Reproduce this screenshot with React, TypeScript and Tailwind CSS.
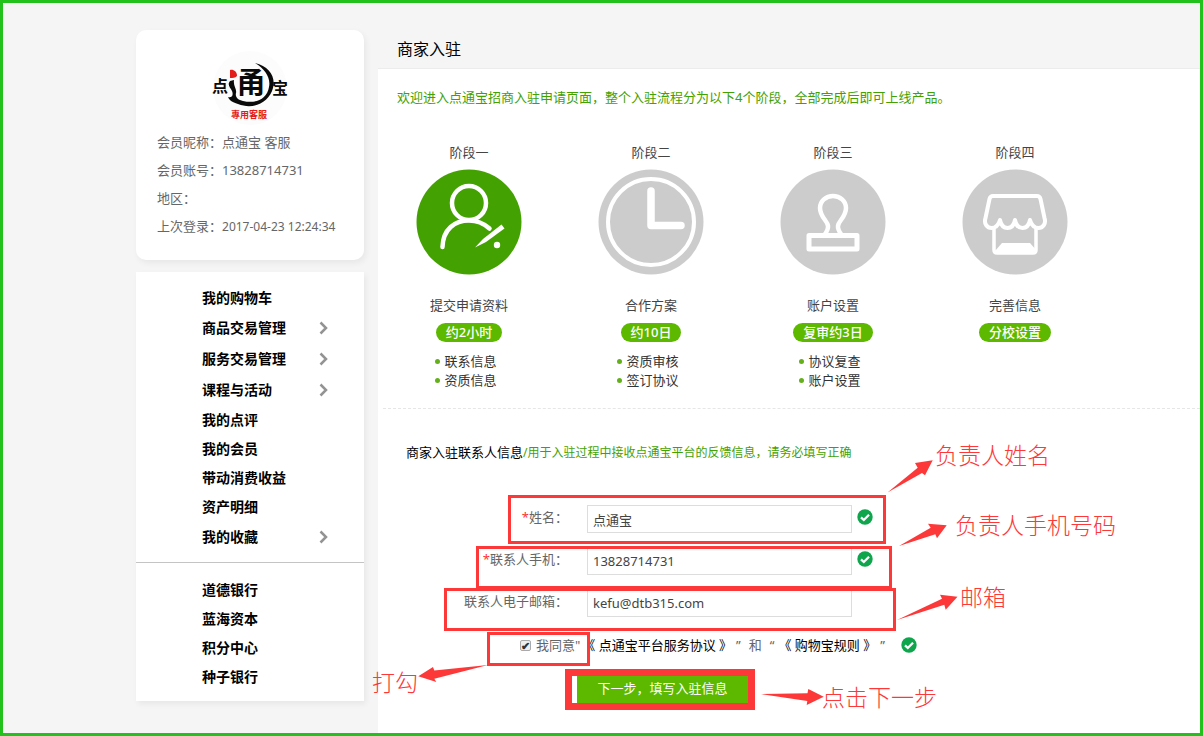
import { useState } from "react";
import type { ReactNode } from "react";
import { clsx } from "clsx";

type MenuItem = { label: string; expandable?: boolean };

type Stage = {
  title: string;
  name: string;
  badge: string;
  active?: boolean;
  items: string[];
  icon: ReactNode;
};

const mainMenu: MenuItem[] = [
  { label: "我的购物车" },
  { label: "商品交易管理", expandable: true },
  { label: "服务交易管理", expandable: true },
  { label: "课程与活动", expandable: true },
  { label: "我的点评" },
  { label: "我的会员" },
  { label: "带动消费收益" },
  { label: "资产明细" },
  { label: "我的收藏", expandable: true },
];

const bankMenu: MenuItem[] = [
  { label: "道德银行" },
  { label: "蓝海资本" },
  { label: "积分中心" },
  { label: "种子银行" },
];

const stages: Stage[] = [
  {
    title: "阶段一",
    name: "提交申请资料",
    badge: "约2小时",
    active: true,
    items: ["联系信息", "资质信息"],
    icon: (
      <g fill="none" stroke="#fff" strokeWidth="4.5" strokeLinecap="round">
        <circle cx="53" cy="34" r="17" />
        <path d="M26.500 78C27 60 39 51.500 53 51.500c9 0 16 4 20.500 8" />
        <path d="M59 78.500 67 70 85.500 55.500 88.500 59.500 70 73Z" fill="#fff" stroke="none" />
        <circle cx="81" cy="76" r="3.200" fill="#fff" stroke="none" />
      </g>
    ),
  },
  {
    title: "阶段二",
    name: "合作方案",
    badge: "约10日",
    items: ["资质审核", "签订协议"],
    icon: (
      <g fill="none" stroke="#fff" strokeLinecap="round" strokeLinejoin="round">
        <circle cx="53" cy="53" r="43" strokeWidth="4" />
        <path d="M53 22v34.500h30" strokeWidth="7.500" />
      </g>
    ),
  },
  {
    title: "阶段三",
    name: "账户设置",
    badge: "复审约3日",
    items: ["协议复查", "账户设置"],
    icon: (
      <g fill="none" stroke="#fff" strokeLinejoin="round">
        <path
          d="M45 65C50 58 48 55 45 51 42 47 40 44 40 39c0-7 6-12 13-12s13 5 13 12c0 5-2 8-5 12-3 4-5 7 0 14"
          strokeWidth="4.500"
        />
        <rect x="29" y="66.500" width="48" height="13.500" strokeWidth="5" />
      </g>
    ),
  },
  {
    title: "阶段四",
    name: "完善信息",
    badge: "分校设置",
    items: [],
    icon: (
      <g fill="none" stroke="#fff" strokeWidth="4" strokeLinejoin="round" strokeLinecap="round">
        <path d="M31 27h44c2 0 3 1 3.500 3L82.500 49c2 6-2 10-6 10s-7-3-8.500-8c-1 5-4 8-7.500 8S54 56 53 51c-1 5-4 8-7.500 8S39 56 38 51c-1.500 5-4.500 8-8.500 8s-8-4-6-10L27.500 30c.5-2 1.500-3 3.500-3Z" />
        <path d="M32 60v21c0 2 1 3 3 3h36c2 0 3-1 3-3V60" strokeWidth="3.500" />
        <path d="M33 82 40 74h28l7 8v2H33Z" fill="#fff" stroke="none" />
      </g>
    ),
  },
];

function Logo() {
  return (
    <svg viewBox="0 0 76 76" className="mx-auto h-[76px] w-[76px]" role="img" aria-label="点通宝">
      <circle cx="38" cy="38" r="37" fill="#fcfcfc" />
      <path
        d="M43 13C57 16 64 27 61 38 57 53 41 60 26 54 20 52 17 50 16 47c3 1 6-1 4-6-2-4-5-6-2-10l4-1c-1 6 3 9 2 13-1 4 2 7 7 8 13 3 24-2 26-14 2-9-4-18-14-24Z"
        fill="#0a0a0a"
      />
      <path d="M18 20c3-1 7 1 7 6-2 2-4 2-7 2Z" fill="#e31d1a" />
      <g className="font-['Noto_Sans_CJK_SC',sans-serif] font-bold" textAnchor="middle">
        <text x="39" y="43" fontSize="29" fill="#0a0a0a">甬</text>
        <text x="8" y="42" fontSize="16" fill="#0a0a0a">点</text>
        <text x="68" y="44" fontSize="16" fill="#0a0a0a">宝</text>
        <text x="37" y="68" fontSize="9" fill="#e31d1a">專用客服</text>
      </g>
    </svg>
  );
}

function MenuList({ items }: { items: MenuItem[] }) {
  return (
    <ul>
      {items.map((item) => (
        <li key={item.label}>
          <a
            href="#"
            className={clsx(
              "flex items-center justify-between pr-9 pl-[66px] text-sm font-bold text-black",
              item.expandable ? "h-[31px]" : "h-[29px]"
            )}
          >
            {item.label}
            {item.expandable && (
              <svg viewBox="0 0 9 14" className="h-[14px] w-[9px]" fill="none" stroke="#939393" strokeWidth="2.500">
                <path d="M1.500 1.500 7 7l-5.500 5.500" />
              </svg>
            )}
          </a>
        </li>
      ))}
    </ul>
  );
}

function ValidMark() {
  return (
    <svg viewBox="0 0 16 16" className="size-4 shrink-0" role="img" aria-label="有效">
      <circle cx="8" cy="8" r="7.700" fill="#0fa54d" />
      <path d="m4 8.300 2.800 2.700L12 5.700" fill="none" stroke="#fff" strokeWidth="2.300" />
    </svg>
  );
}

type FieldProps = {
  id: string;
  label: string;
  type?: string;
  required?: boolean;
  valid?: boolean;
  defaultValue: string;
};

function Field({ id, label, type = "text", required, valid, defaultValue }: FieldProps) {
  return (
    <div className="flex items-start">
      <label htmlFor={id} className="w-[190px] text-right leading-6 text-[#666]">
        {required && <span className="text-[#f33]">*</span>}
        {label}&#65306;
      </label>
      <input
        id={id}
        type={type}
        defaultValue={defaultValue}
        className="ml-[19px] h-7 w-[265px] border border-[#ddd] bg-white px-[5px] text-[#444] outline-none"
      />
      {valid && (
        <span className="mt-1 ml-[5px]">
          <ValidMark />
        </span>
      )}
    </div>
  );
}

// Red boxes, arrows and captions of the how-to guide, laid over the form
function GuideOverlay() {
  return (
    <div className="pointer-events-none absolute inset-0 text-[23px] leading-8 font-light whitespace-nowrap text-[#fd3838]">
      <div className="absolute top-[86px] left-[130px] h-[49px] w-[378px] border-3 border-[#fd3838]" />
      <div className="absolute top-[137px] left-[98px] h-[43px] w-[416px] border-3 border-[#fd3838]" />
      <div className="absolute top-[179px] left-[66px] h-[43px] w-[452px] border-3 border-[#fd3838]" />
      <div className="absolute top-[223px] left-[109px] h-[34px] w-[103px] border-3 border-[#fd3838]" />
      <div className="absolute top-[260px] left-[187px] h-[41px] w-[190px] border-7 border-[#fd3838]" />
      <svg viewBox="378 409 822 324" className="absolute top-0 left-0 h-[324px] w-[822px]" fill="#fd3838">
        <path d="M887.500 492.500 917.700 467.700 915 463 932.700 460.300 925 475.300 922 473Z" />
        <path d="M899 546 930.700 527.700 928 523.700 946.700 525.300 937 538.300 935.300 534.300Z" />
        <path d="M897 620 942 598.700 940 594.700 957.500 596.700 945.700 609.700 944.300 604.700Z" />
        <path d="M488 665 434.300 678.700 436.300 682 418.300 676.300 433 667 434.300 670.500Z" />
        <path d="M761 694 807.500 693.300 808.300 689 823.700 696.700 806.700 705 807.300 701Z" />
      </svg>
      <span className="absolute top-[30px] left-[557px]">负责人姓名</span>
      <span className="absolute top-[100px] left-[577px]">负责人手机号码</span>
      <span className="absolute top-[172px] left-[582px]">邮箱</span>
      <span className="absolute top-[257px] -left-1.5">打勾</span>
      <span className="absolute top-[272px] left-[444px]">点击下一步</span>
    </div>
  );
}

export default function App() {
  const [agreed, setAgreed] = useState(true);

  return (
    <div className="flex min-h-screen gap-3.5 overflow-hidden border-3 border-[#22c11c] bg-[#f5f5f5] pl-[133px] font-['Noto_Sans','Noto_Sans_CJK_SC',sans-serif] text-[13px] text-[#444]">
      <aside className="flex w-[228px] shrink-0 flex-col gap-3 pt-[27px] pb-8">
        <section className="rounded-[10px] bg-white px-[21px] py-5 text-[#666] shadow-[2px_3px_6px_rgba(0,0,0,0.06)]">
          <Logo />
          <div className="pt-0.5 leading-7 whitespace-nowrap">
            <p>会员昵称&#65306;点通宝 客服</p>
            <p>会员账号&#65306;13828714731</p>
            <p>地区&#65306;</p>
            <p>
              上次登录&#65306;<span className="text-xs">2017-04-23 12:24:34</span>
            </p>
          </div>
        </section>

        <nav className="bg-white shadow-[2px_3px_6px_rgba(0,0,0,0.06)]">
          <div className="border-b border-[#c4c4c4] pt-[11px] pb-2.5">
            <MenuList items={mainMenu} />
          </div>
          <div className="pt-3 pb-2.5">
            <MenuList items={bankMenu} />
          </div>
        </nav>
      </aside>

      <main className="flex min-w-0 flex-1 flex-col">
        <h1 className="border-b border-[#ececec] pt-[34px] pb-[7px] pl-[19px] text-base text-black">商家入驻</h1>

        <div className="flex-1 bg-white">
          <p className="pt-[18px] pl-[19px] leading-5 text-[#43a102]">
            欢迎进入点通宝招商入驻申请页面&#65292;整个入驻流程分为以下4个阶段&#65292;全部完成后即可上线产品。
          </p>

          <div className="grid max-w-[728px] grid-cols-4 pt-[35px]">
            {stages.map((stage) => (
              <section key={stage.title} className="flex flex-col items-center">
                <h2 className="leading-5">{stage.title}</h2>
                <svg viewBox="0 0 106 106" className="mt-[7px] size-[106px]" aria-hidden="true">
                  <circle cx="53" cy="53" r="52.500" fill={stage.active ? "#43a102" : "#ccc"} />
                  {stage.icon}
                </svg>
                <p className="mt-5 leading-5">{stage.name}</p>
                <span className="mt-2 rounded-full bg-[#5cb900] px-2.5 leading-[19px] font-medium text-white">
                  {stage.badge}
                </span>
                <ul className="mt-2.5 pr-1.5 leading-[19px] text-[#333]">
                  {stage.items.map((item) => (
                    <li key={item} className="flex items-center gap-1">
                      <span className="size-[5px] rounded-full bg-[#63b01b]" />
                      {item}
                    </li>
                  ))}
                </ul>
              </section>
            ))}
          </div>

          <div className="mt-[18px] ml-[5px] border-t border-dashed border-[#e6e6e6]" />

          <form className="relative pb-[29px]" onSubmit={(e) => e.preventDefault()}>
            <h2 className="pt-[33px] pl-7 leading-5 text-black">
              商家入驻联系人信息
              <span className="text-xs text-[#43a102]">
                /用于入驻过程中接收点通宝平台的反馈信息&#65292;请务必填写正确
              </span>
            </h2>

            <div className="flex flex-col gap-3.5 pt-[43px]">
              <Field id="name" label="姓名" required valid defaultValue="点通宝" />
              <Field id="phone" label="联系人手机" type="tel" required valid defaultValue="13828714731" />
              <Field id="email" label="联系人电子邮箱" type="email" defaultValue="kefu@dtb315.com" />
            </div>

            <div className="mt-[18px] flex items-center pl-[142px] leading-5 whitespace-nowrap text-[#666]">
              <input
                id="agree"
                type="checkbox"
                checked={agreed}
                onChange={(e) => setAgreed(e.target.checked)}
                className="grid size-[11px] appearance-none place-content-center rounded-xs border border-[#aaa] bg-[#eee] before:hidden before:text-[11px] before:leading-none before:font-bold before:text-[#333] before:content-['✔'] checked:before:block"
              />
              <label htmlFor="agree" className="ml-[5px]">
                我同意"
              </label>
              <a href="#" className="ml-0.5 text-black">
                《 点通宝平台服务协议 》
              </a>
              <span className="ml-1">”</span>
              <span className="mx-2">和</span>
              <span className="mr-1">“</span>
              <a href="#" className="text-black">
                《 购物宝规则 》
              </a>
              <span className="ml-1">”</span>
              <span className="ml-4">
                <ValidMark />
              </span>
            </div>

            <button type="submit" className="mt-5 ml-[199px] block h-7 w-[171px] bg-[#5cb900] text-white">
              下一步&#65292;填写入驻信息
            </button>

            <GuideOverlay />
          </form>
        </div>
      </main>
    </div>
  );
}
